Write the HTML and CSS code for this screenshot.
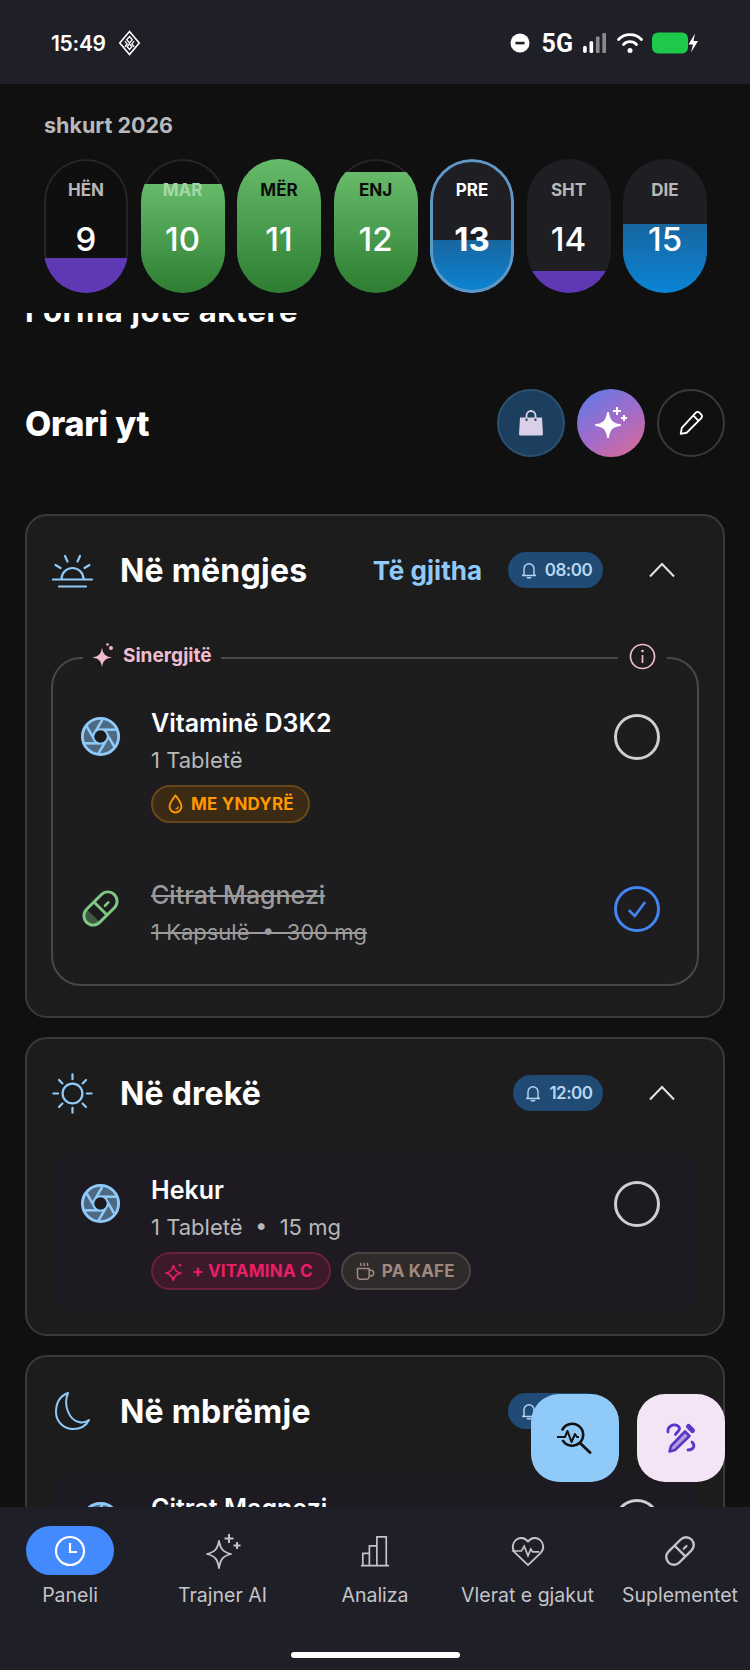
FILE: index.html
```html
<!DOCTYPE html>
<html lang="sq">
<head>
<meta charset="UTF-8">
<meta name="viewport" content="width=device-width, initial-scale=1.0">
<title>Orari yt</title>
<link rel="stylesheet" href="styles.css">
</head>
<body>

<!-- shared icons -->
<svg class="icon-defs" aria-hidden="true">
    <symbol id="i-aperture" viewBox="0 0 24 24">
        <circle cx="12" cy="12" r="10.6" fill="#4d6a82" stroke="#90caf9" stroke-width="1.7"/>
        <g fill="none" stroke="#90caf9" stroke-width="1.5">
            <path d="m14.31 8 5.74 9.94"/><path d="M9.69 8h11.48"/><path d="m7.38 12 5.74-9.94"/>
            <path d="M9.69 16 3.95 6.06"/><path d="M14.31 16H2.83"/><path d="m16.62 12-5.74 9.94"/>
        </g>
        <circle cx="12" cy="12" r="3.6" fill="#1c1c1f"/>
    </symbol>
    <symbol id="i-bell" viewBox="0 0 24 24">
        <path d="M6 17V10.5a6 6 0 0 1 12 0V17l1.6 1.6H4.4Z" fill="none" stroke="currentColor" stroke-width="1.7" stroke-linejoin="round"/>
        <path d="M10 21.2h4" stroke="currentColor" stroke-width="1.7" stroke-linecap="round"/>
    </symbol>
    <symbol id="i-chevron" viewBox="0 0 28 16">
        <path d="M2 14.5 14 2l12 12.5" fill="none" stroke="currentColor" stroke-width="2"/>
    </symbol>
    <symbol id="i-pill" viewBox="0 0 24 24">
        <g transform="rotate(45 12 12)" fill="none" stroke="currentColor" stroke-width="1.7">
            <rect x="6.6" y="0.5" width="10.8" height="23" rx="5.4"/>
            <path d="M6.6 12h10.8"/>
        </g>
        <path d="m14.6 10.4 2-2" stroke="currentColor" stroke-width="1.5" stroke-linecap="round"/>
    </symbol>
</svg>

<div class="app">
    <div class="status-bar">
        <div class="status-left">
            <span class="clock">15:49</span>
            <svg class="status-diamond" viewBox="0 0 24 28"><path d="M12 1.5 22.500 14 12 26.500 1.500 14Z" fill="none" stroke="#fff" stroke-width="1.700"/><path d="M12 7l3 3.500-3 3.500-3-3.500ZM7 12l2.500 3L7 18M17 12l-2.500 3 2.500 3M12 15l2.500 3-2.500 3-2.500-3Z" fill="none" stroke="#fff" stroke-width="1.400"/></svg>
        </div>
        <div class="status-right">
            <svg class="status-dnd" viewBox="0 0 20 20"><circle cx="10" cy="10" r="9.500" fill="#fff"/><rect x="5.500" y="8.800" width="9" height="2.600" fill="#1f1f27"/></svg>
            <span class="net">5G</span>
            <svg class="status-signal" viewBox="0 0 26 24"><rect x="0" y="15" width="4" height="8" rx="2" fill="#fff"/><rect x="7" y="10" width="4" height="13" rx="1.500" fill="#fff"/><rect x="14" y="5" width="4" height="18" rx="1" fill="#8a8a8e"/><rect x="21" y="1" width="4" height="22" rx="1" fill="#8a8a8e"/></svg>
            <svg class="status-wifi" viewBox="0 0 26 22"><g fill="none" stroke="#fff" stroke-width="2.800" stroke-linecap="round"><path d="M1.500 7.500a16 16 0 0 1 23 0"/><path d="M6.500 12.500a9 9 0 0 1 13 0"/></g><circle cx="13" cy="18.500" r="2.500" fill="#fff"/></svg>
            <svg class="status-battery" viewBox="0 0 47 22"><rect x="0" y="0.500" width="36" height="21" rx="6" fill="#1ec84b"/><path d="M43 1.500 36.500 12.500H41L39 20.500l7-11.500h-4.500Z" fill="#fff"/></svg>
        </div>
    </div>

    <div class="calendar">
        <div class="month">shkurt 2026</div>
        <div class="days">
            <div class="day day-plain">
                <div class="day-fill fill-purple" style="height: 35px;"></div>
                <span class="day-name">HËN</span><span class="day-num">9</span>
            </div>
            <div class="day day-plain">
                <div class="day-fill fill-green" style="height: 109px;"></div>
                <span class="day-name name-mint">MAR</span><span class="day-num">10</span>
            </div>
            <div class="day day-plain">
                <div class="day-fill fill-green" style="height: 100%;"></div>
                <span class="day-name name-dark">MËR</span><span class="day-num">11</span>
            </div>
            <div class="day day-plain">
                <div class="day-fill fill-green" style="height: 121px;"></div>
                <span class="day-name name-dark">ENJ</span><span class="day-num">12</span>
            </div>
            <div class="day day-soft day-today">
                <div class="day-fill fill-blue" style="height: 53px;"></div>
                <span class="day-name name-white">PRE</span><span class="day-num num-bold">13</span>
            </div>
            <div class="day day-soft">
                <div class="day-fill fill-purple" style="height: 22px;"></div>
                <span class="day-name">SHT</span><span class="day-num">14</span>
            </div>
            <div class="day day-soft">
                <div class="day-fill fill-blue" style="height: 69px;"></div>
                <span class="day-name">DIE</span><span class="day-num">15</span>
            </div>
        </div>
    </div>

    <div class="scroll">
        <div class="peek-title">Forma jote aktere</div>

        <div class="schedule-head">
            <h2>Orari yt</h2>
            <div class="schedule-actions">
                <button class="round-btn btn-bag">
                    <svg viewBox="0 0 26 26" width="26" height="26"><path d="M2 7.500h22l1 16.500a1.500 1.500 0 0 1-1.500 1.500h-21A1.500 1.500 0 0 1 1 24Z" fill="#d9cfe6"/><path d="M8.500 10.500V5.500a4.500 4.500 0 0 1 9 0v5" fill="none" stroke="#d9cfe6" stroke-width="1.800"/><path d="M8.500 8.500v2.500M17.500 8.500v2.500" stroke="#1c3f5f" stroke-width="1.800"/></svg>
                </button>
                <button class="round-btn btn-ai">
                    <svg viewBox="0 0 36 40" width="36" height="40"><path d="M15 10c1.200 8 4.500 11 12 12-7.500 1-10.800 4-12 12-1.200-8-4.500-11-12-12 7.500-1 10.800-4 12-12Z" fill="#fff" stroke="#fff" stroke-width="2" stroke-linejoin="round"/><path d="M24 4v8M20 8h8M31 12v6M28 15h6" stroke="#fff" stroke-width="2" fill="none"/></svg>
                </button>
                <button class="round-btn btn-edit">
                    <svg viewBox="0 0 24 24" width="26" height="26"><path d="M16.500 2.500a2.300 2.300 0 0 1 3.300 0l1.700 1.700a2.300 2.300 0 0 1 0 3.300L8 21l-5.500 1 1-5.500ZM14 5l5 5" fill="none" stroke="#fff" stroke-width="1.700" stroke-linejoin="round"/></svg>
                </button>
            </div>
        </div>

        <div class="card">
            <div class="card-head">
                <svg class="period-icon" viewBox="0 0 41 41"><g fill="none" stroke="#90caf9" stroke-width="2.200" stroke-linecap="round"><path d="M9.500 29a11 11 0 0 1 22 0"/><path d="M1 29.500h39"/><path d="M7 36.500h27"/><path d="m13 6 2.500 5.500M28 6l-2.500 5.500M3.500 15l5 3M37.500 15l-5 3"/></g></svg>
                <span class="period-title">Në mëngjes</span>
                <span class="take-all">Të gjitha</span>
                <span class="alarm alarm-wide"><svg width="20" height="20"><use href="#i-bell"/></svg>08:00</span>
                <svg class="chevron" width="28" height="16"><use href="#i-chevron"/></svg>
            </div>

            <div class="synergy">
                <div class="synergy-label">
                    <svg viewBox="0 0 24 24" width="24" height="26"><path d="M10 4.500c1 6.500 3 9 10 10-7 1-9 3.500-10 9.500-1-6-3-8.500-10-9.500 7-1 9-3.500 10-10Z" fill="#f1bcd0"/><circle cx="19" cy="5" r="2" fill="#f1bcd0"/><circle cx="15.500" cy="1.500" r="1.300" fill="#f1bcd0"/></svg>
                    <span>Sinergjitë</span>
                </div>
                <div class="synergy-info">
                    <svg viewBox="0 0 27 27" width="27" height="27"><circle cx="13.500" cy="13.500" r="12" fill="none" stroke="#f1bcd0" stroke-width="1.700"/><path d="M13.500 12v8" stroke="#f1bcd0" stroke-width="1.700"/><circle cx="13.500" cy="8" r="1.300" fill="#f1bcd0"/></svg>
                </div>

                <div class="item">
                    <svg class="item-icon"><use href="#i-aperture"/></svg>
                    <div class="item-body">
                        <div class="item-name">Vitaminë D3K2</div>
                        <div class="item-dose">1 Tabletë</div>
                        <div class="chips">
                            <span class="chip chip-orange">
                                <svg viewBox="0 0 20 24" width="17" height="22"><path d="M10 2c4 5 7 8.500 7 13a7 7 0 0 1-14 0c0-4.500 3-8 7-13Z" fill="none" stroke="currentColor" stroke-width="2.200"/><path d="M10 18a3 3 0 0 0 3-3" fill="none" stroke="currentColor" stroke-width="1.600"/></svg>
                                ME YNDYRË
                            </span>
                        </div>
                    </div>
                    <span class="radio"></span>
                </div>

                <div class="item item-done">
                    <svg class="item-icon icon-green" viewBox="0 0 24 24">
                        <path d="M3.600 12.200 12 20.400a5.400 5.400 0 0 1-8.400-8.200Z" fill="#3f5a41"/>
                        <use href="#i-pill" width="24" height="24"/>
                    </svg>
                    <div class="item-body">
                        <div class="item-name">Citrat Magnezi</div>
                        <div class="item-dose">1 Kapsulë&nbsp; •&nbsp; 300 mg</div>
                    </div>
                    <span class="radio radio-done">
                        <svg viewBox="0 0 24 24" width="28" height="28"><path d="m5 13 5 5L19 6" fill="none" stroke="#4285f4" stroke-width="2.300"/></svg>
                    </span>
                </div>
            </div>
        </div>

        <div class="card">
            <div class="card-head">
                <svg class="period-icon" viewBox="0 0 24 24"><g fill="none" stroke="#90caf9" stroke-width="1.300" stroke-linecap="round"><circle cx="12" cy="12" r="5.800"/><path d="M12 .8v2.800M12 20.400v2.800M.8 12h2.800M20.400 12h2.800M4.100 4.100l2 2M17.900 17.900l2 2M4.100 19.900l2-2M17.900 6.100l2-2"/></g></svg>
                <span class="period-title">Në drekë</span>
                <span class="alarm"><svg width="20" height="20"><use href="#i-bell"/></svg>12:00</span>
                <svg class="chevron" width="28" height="16"><use href="#i-chevron"/></svg>
            </div>
            <div class="plain-box">
                <div class="item">
                    <svg class="item-icon"><use href="#i-aperture"/></svg>
                    <div class="item-body">
                        <div class="item-name">Hekur</div>
                        <div class="item-dose">1 Tabletë&nbsp; •&nbsp; 15 mg</div>
                        <div class="chips">
                            <span class="chip chip-pink">
                                <svg viewBox="0 0 24 24" width="20" height="22"><path d="M10 5c1 6 3 8 8 9.500-5 1.500-7 3.500-8 9-1-5.500-3-7.500-8-9C7 13 9 11 10 5Z" fill="none" stroke="currentColor" stroke-width="2"/><circle cx="18" cy="5" r="1.500" fill="currentColor"/></svg>
                                + VITAMINA C
                            </span>
                            <span class="chip chip-brown">
                                <svg viewBox="0 0 24 24" width="20" height="22"><path d="M3 9h14v9a4 4 0 0 1-4 4H7a4 4 0 0 1-4-4ZM17 11h2a3 3 0 0 1 0 7h-2M7 2v4M11 2v4M15 2v4" fill="none" stroke="currentColor" stroke-width="1.800"/></svg>
                                PA KAFE
                            </span>
                        </div>
                    </div>
                    <span class="radio"></span>
                </div>
            </div>
        </div>

        <div class="card">
            <div class="card-head">
                <svg class="period-icon" viewBox="0 0 41 41"><path d="M16 2C8 5 4 12 4 21c0 10 8 17 17 17 7 0 13-3 16-9-3 2-7 3-10 2C17 29 11 14 16 2Z" fill="none" stroke="#90caf9" stroke-width="2" stroke-linejoin="round"/></svg>
                <span class="period-title">Në mbrëmje</span>
                <span class="alarm alarm-wide"><svg width="20" height="20"><use href="#i-bell"/></svg>20:00</span>
                <svg class="chevron" width="28" height="16"><use href="#i-chevron"/></svg>
            </div>
            <div class="plain-box">
                <div class="item">
                    <svg class="item-icon"><use href="#i-aperture"/></svg>
                    <div class="item-body">
                        <div class="item-name">Citrat Magnezi</div>
                    </div>
                    <span class="radio"></span>
                </div>
            </div>
        </div>
    </div>

    <button class="fab fab-blue">
        <svg viewBox="0 0 36 32" width="36" height="32"><path d="M5 8.500A11 11 0 1 1 5.500 18" fill="none" stroke="#111" stroke-width="2.600"/><path d="M0 15h8l2.500-6 4 11 3.500-8 2 3h2" fill="none" stroke="#111" stroke-width="2" stroke-linejoin="round"/><path d="m23.500 21.500 9.500 9" stroke="#111" stroke-width="2.800" stroke-linecap="round"/></svg>
    </button>
    <button class="fab fab-lilac">
        <svg viewBox="0 0 32 32" width="32" height="32"><path d="M3 10C2 5 8 1 13 4c4 3-1 6-2.500 8.500M23 28c5 0 8-4 4-8" fill="none" stroke="#5e35c8" stroke-width="2.800" stroke-linecap="round"/><path d="M20 9.500l4.500 4.500L10 28l-5.500 1.500L6 24Z" fill="#b39ddb" stroke="#5e35c8" stroke-width="2.600" stroke-linejoin="round"/><path d="M23.500 4.500l4 4" stroke="#5e35c8" stroke-width="5" stroke-linecap="round"/></svg>
    </button>

    <nav class="tabbar">
        <div class="tabs">
            <a class="tab tab-active">
                <span class="tab-icon">
                    <svg viewBox="0 0 32 32" width="32" height="32"><circle cx="16" cy="16" r="14" fill="none" stroke="#fff" stroke-width="2.200"/><path d="M16 8v9h7" fill="none" stroke="#fff" stroke-width="2.200"/></svg>
                </span>
                <span class="tab-label">Paneli</span>
            </a>
            <a class="tab">
                <span class="tab-icon">
                    <svg viewBox="0 0 36 36" width="36" height="36"><path d="M14 8c1.500 8 4 11 12 13-8 2-10.500 5-12 14C12.500 26 10 23 2 21c8-2 10.500-5 12-13Z" fill="none" stroke="#c4c4c8" stroke-width="1.800" stroke-linejoin="round"/><path d="M24 1v9M19.500 5.500h9M32 9v7M28.500 12.500h7" stroke="#c4c4c8" stroke-width="2" fill="none"/></svg>
                </span>
                <span class="tab-label">Trajner AI</span>
            </a>
            <a class="tab">
                <span class="tab-icon">
                    <svg viewBox="0 0 32 34" width="30" height="34"><path d="M1 32.500h30M3 32.500v-13h7v13M10 32.500v-21h8v21M18 32.500V2h10v30.500" fill="none" stroke="#c4c4c8" stroke-width="1.800"/></svg>
                </span>
                <span class="tab-label">Analiza</span>
            </a>
            <a class="tab">
                <span class="tab-icon">
                    <svg viewBox="0 0 36 34" width="34" height="34"><path d="M18 32 4.500 19C-4 9 10-3 18 7c8-10 22 2 13.500 12Z" fill="none" stroke="#c4c4c8" stroke-width="2" stroke-linejoin="round"/><path d="M1 17h10l3-5 4 10 3-7 2 3h7" fill="none" stroke="#c4c4c8" stroke-width="1.800"/></svg>
                </span>
                <span class="tab-label">Vlerat e gjakut</span>
            </a>
            <a class="tab">
                <span class="tab-icon tab-pill">
                    <svg width="34" height="34"><use href="#i-pill"/></svg>
                </span>
                <span class="tab-label">Suplementet</span>
            </a>
        </div>
        <div class="home-bar"></div>
    </nav>
</div>

</body>
</html>
```

FILE: styles.css
```css
* {
    box-sizing: border-box;
}
body {
    margin: 0;
    background-color: #101011;
    font-family: Inter, "Liberation Sans", sans-serif;
    color: #ffffff;
}
button {
    border: none;
    padding: 0;
    font: inherit;
}
.icon-defs {
    position: absolute;
    width: 0;
    height: 0;
}
.app {
    position: relative;
    display: flex;
    flex-direction: column;
    width: 750px;
    height: 1670px;
    overflow: hidden;
}

/* status bar */
.status-bar {
    flex: none;
    display: flex;
    justify-content: space-between;
    align-items: center;
    height: 84px;
    padding: 2px 51px 0;
    background-color: #1f1f27;
}
.status-left,
.status-right {
    display: flex;
    align-items: center;
}
.clock {
    font-size: 21px;
    font-weight: 600;
    letter-spacing: -0.3px;
}
.status-diamond {
    width: 23px;
    height: 26px;
    margin-left: 12px;
}
.status-dnd {
    width: 20px;
    height: 20px;
}
.net {
    margin-left: 12px;
    font-family: Roboto, sans-serif;
    font-size: 25px;
    font-weight: 700;
}
.status-signal {
    width: 26px;
    height: 22px;
    margin-left: 9px;
}
.status-wifi {
    width: 26px;
    height: 22px;
    margin-left: 9px;
}
.status-battery {
    width: 47px;
    height: 22px;
    margin-left: 9px;
}

/* week strip */
.calendar {
    flex: none;
    padding: 28px 43px 20px 44px;
    background-color: #101011;
}
.month {
    font-size: 21.5px;
    line-height: 26px;
    font-weight: 700;
    color: #b8b8b8;
}
.days {
    display: flex;
    justify-content: space-between;
    margin-top: 21px;
}
.day {
    position: relative;
    display: flex;
    flex-direction: column;
    align-items: center;
    width: 84px;
    height: 134px;
    padding-top: 20px;
    border-radius: 42px;
    overflow: hidden;
}
.day-plain {
    background-color: #0f0f10;
    box-shadow: inset 0 0 0 2px #25252a;
}
.day-soft {
    background-color: #1e1e23;
}
.day-today::after {
    content: "";
    position: absolute;
    inset: 0;
    border: 3px solid #5f97c6;
    border-radius: 42px;
}
.day-fill {
    position: absolute;
    left: 0;
    right: 0;
    bottom: 0;
}
.fill-purple {
    background: #5f38b4;
}
.fill-green {
    background: linear-gradient(to bottom, #66bb6a, #2e7d32);
}
.fill-blue {
    background: linear-gradient(to bottom, #17669f, #0b84d6);
}
.day-name,
.day-num {
    position: relative;
}
.day-name {
    font-size: 17px;
    line-height: 22px;
    font-weight: 700;
    color: #b8b8b8;
}
.name-mint {
    color: #a5d6a7;
}
.name-dark {
    color: #0c0c0c;
}
.name-white {
    color: #ffffff;
}
.day-num {
    margin-top: 18px;
    font-size: 33px;
    line-height: 40px;
    font-weight: 500;
}
.num-bold {
    font-weight: 700;
}

/* scrolling part */
.scroll {
    flex: 1;
    min-height: 0;
    padding: 0 25px;
    overflow: hidden;
}
.peek-title {
    margin-top: -20px;
    font-size: 31px;
    line-height: 36px;
    font-weight: 700;
    letter-spacing: 0.6px;
    white-space: nowrap;
}
.schedule-head {
    display: flex;
    justify-content: space-between;
    align-items: center;
    margin-top: 60px;
}
.schedule-head h2 {
    margin: 0;
    font-size: 34px;
    font-weight: 800;
    letter-spacing: -0.2px;
}
.schedule-actions {
    display: flex;
    gap: 12px;
}
.round-btn {
    display: flex;
    justify-content: center;
    align-items: center;
    width: 68px;
    height: 68px;
    border-radius: 50%;
}
.btn-bag {
    background-color: #1c3f5f;
    border: 2px solid #2c5272;
}
.btn-ai {
    background: linear-gradient(145deg, #5a7be8, #a56bc8 55%, #e06d8e);
}
.btn-edit {
    background: transparent;
    border: 2px solid #3a3a3a;
}

.card {
    margin-top: 19px;
    background-color: #1c1c1d;
    border: 2px solid #3a3a3b;
    border-radius: 22px;
}
.schedule-head + .card {
    margin-top: 57px;
}
.card-head {
    display: flex;
    align-items: center;
    height: 108px;
    padding: 0 47px 0 25px;
}
.period-icon {
    flex: none;
    width: 41px;
    height: 41px;
    margin-right: 27px;
}
.period-title {
    flex: 1;
    font-size: 32px;
    font-weight: 700;
    letter-spacing: 0.2px;
}
.take-all {
    margin-right: 26px;
    font-size: 26px;
    font-weight: 700;
    color: #90caf9;
}
.alarm {
    display: flex;
    justify-content: center;
    align-items: center;
    gap: 6px;
    width: 90px;
    height: 36px;
    border-radius: 18px;
    background-color: #1f4b74;
    font-size: 17px;
    font-weight: 600;
    color: #b9d6f0;
    letter-spacing: -0.5px;
}
.alarm-wide {
    width: 95px;
}
.chevron {
    flex: none;
    margin-left: 45px;
    color: #e4e4e4;
}

.synergy {
    position: relative;
    margin: 33px 24px 30px;
    padding: 48px 37px 37px 27px;
    border: 2px solid #4b4647;
    border-radius: 30px;
    background-color: #1d1c1e;
}
.synergy-label {
    position: absolute;
    top: -19px;
    left: 30px;
    display: flex;
    align-items: center;
    gap: 7px;
    padding: 0 9px;
    height: 30px;
    background-color: #1c1c1d;
    font-size: 19px;
    font-weight: 700;
    color: #f1bcd0;
}
.synergy-info {
    position: absolute;
    top: -16px;
    right: 30px;
    display: flex;
    padding: 0 11px;
    background-color: #1c1c1d;
}
.plain-box {
    margin: 5px 26px 22px;
    padding: 22px 37px 22px 27px;
    border-radius: 22px;
    background-color: #1e1a21;
}
.item {
    display: flex;
    align-items: flex-start;
}
.item + .item {
    margin-top: 56px;
}
.item-icon {
    flex: none;
    width: 41px;
    height: 41px;
    margin-top: 9px;
    margin-right: 30px;
}
.icon-green {
    color: #81c784;
}
.item-body {
    flex: 1;
}
.item-name {
    font-size: 25px;
    line-height: 32px;
    font-weight: 600;
}
.item-dose {
    margin-top: 6px;
    font-size: 22px;
    line-height: 30px;
    color: #b8b8b8;
}
.item-done .item-name,
.item-done .item-dose {
    color: #9b9b9b;
    font-weight: 400;
    text-decoration: line-through;
}
.item-done .item-name {
    font-weight: 500;
}
.chips {
    display: flex;
    gap: 10px;
    margin-top: 10px;
}
.chip {
    display: flex;
    align-items: center;
    gap: 7px;
    height: 38px;
    padding: 0 14px;
    border-radius: 19px;
    border: 2px solid;
    font-size: 17px;
    font-weight: 700;
    letter-spacing: 0.2px;
    white-space: nowrap;
}
.chip-orange {
    color: #ff9800;
    background-color: #3b2a14;
    border-color: #69491a;
}
.chip-pink {
    color: #e91e63;
    background-color: #3d1a2b;
    border-color: #6a1f3d;
    padding: 0 16px 0 12px;
}
.chip-brown {
    color: #a1887f;
    background-color: #2f2b2b;
    border-color: #4a4544;
    padding: 0 14px 0 12px;
}
.radio {
    flex: none;
    display: flex;
    justify-content: center;
    align-items: center;
    width: 46px;
    height: 46px;
    margin-top: 7px;
    border: 3px solid #cfcfcf;
    border-radius: 50%;
}
.radio-done {
    border-color: #4285f4;
}

/* floating buttons */
.fab {
    position: absolute;
    top: 1394px;
    display: flex;
    justify-content: center;
    align-items: center;
    width: 88px;
    height: 88px;
    border-radius: 28px;
}
.fab-blue {
    left: 531px;
    background-color: #90caf9;
}
.fab-lilac {
    left: 637px;
    background-color: #f3e5f5;
}

/* bottom nav */
.tabbar {
    flex: none;
    height: 163px;
    padding-top: 19px;
    background-color: #1f1f27;
}
.tabs {
    display: flex;
    justify-content: space-between;
}
.tab {
    display: flex;
    flex-direction: column;
    align-items: center;
    width: 140px;
}
.tab-icon {
    display: flex;
    justify-content: center;
    align-items: center;
    width: 88px;
    height: 49px;
    border-radius: 25px;
}
.tab-active .tab-icon {
    background-color: #448aff;
}
.tab-pill {
    color: #c4c4c8;
}
.tab-label {
    margin-top: 7px;
    font-size: 19.5px;
    line-height: 26px;
    color: #c4c4c8;
    white-space: nowrap;
}
.home-bar {
    width: 169px;
    height: 6px;
    margin: 44px auto 0;
    border-radius: 3px;
    background-color: #ffffff;
}
```
